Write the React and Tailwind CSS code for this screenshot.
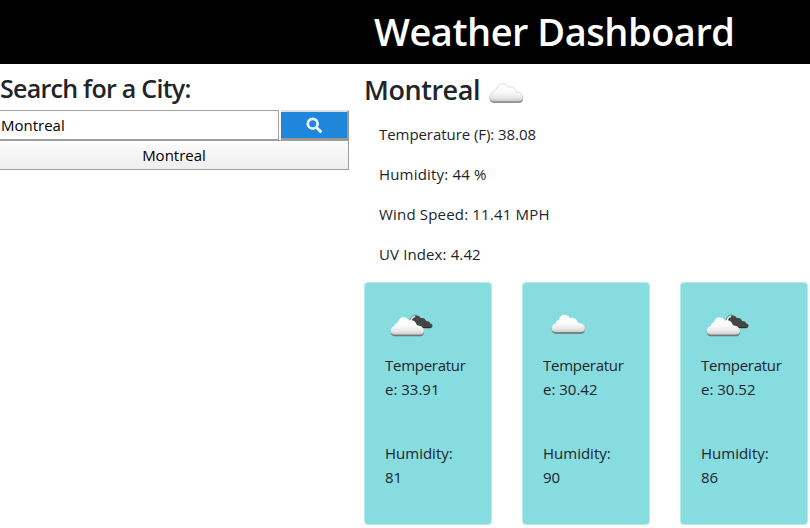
import React from "react";

const forecast = [
  { icon: "broken", temp: "33.91", humidity: "81" },
  { icon: "cloud", temp: "30.42", humidity: "90" },
  { icon: "broken", temp: "30.52", humidity: "86" },
];

const current = [
  { text: "Temperature (F): 38.08", cls: "tracking-[-0.06px]" },
  { text: "Humidity: 44 %", cls: "tracking-[0.18px]" },
  { text: "Wind Speed: 11.41 MPH", cls: "tracking-[0.18px]" },
  { text: "UV Index: 4.42", cls: "tracking-[0.12px]" },
];

const CLOUD =
  "M4.500 19C1.800 19 .3 17.200.3 14.900c0-2.700 1.500-4.400 3.900-5C4.600 7.800 6 6.500 7.600 6.100 8.200 2.800 10.300.7 13.300.7c2.600 0 4.500 1.400 5.500 3.700 3.400-1.200 6.700.3 7.600 3.600.2.900.8 1.400 1.700 1.600C31 9.800 34 11.700 34 14.800c0 2.500-1.500 4.200-4.200 4.200z";

function Cloud({ id, broken = false, outlined = false, className }) {
  return (
    <svg className={className} width={broken ? 43 : 35} height="23" viewBox={broken ? "0 0 43 23" : "0 0 35 23"}>
      <defs>
        <linearGradient id={id} x1="0" y1="0" x2="0" y2="1">
          <stop offset="0" stopColor="#ffffff" />
          <stop offset="0.5" stopColor="#fafafa" />
          <stop offset="0.8" stopColor="#e8e8e8" />
          <stop offset="1" stopColor="#cccccc" />
        </linearGradient>
        <linearGradient id={id + "-edge"} x1="0" y1="0" x2="0" y2="1">
          <stop offset="0.2" stopColor="#b0b0b0" stopOpacity="0.35" />
          <stop offset="0.8" stopColor="#a0a0a0" stopOpacity="0.8" />
          <stop offset="1" stopColor="#686868" />
        </linearGradient>
      </defs>
      {broken && (
        <>
          <path
            d="M21.500 6.500c.6-3.200 2.300-5.100 5-5.100 2.200 0 3.600 1 4.200 2.700 2.800-.8 5 .7 5.400 3 2.600-.1 3.800 1 4 2.400 1.900.3 2.500 1.300 2.400 2.400-.2 1.500-1.400 2.300-3.300 2.300H28z"
            fill="#454545"
          />
          <path d="M20 6c.8-3 2.600-4.900 5-4.900 1.500 0 2.700.6 3.400 1.600" fill="none" stroke="#6f7676" strokeWidth="0.900" />
          <path d="M20.900 7.500c.6-3 2-5 4.200-5" fill="none" stroke="#dcf0f0" strokeWidth="1.300" />
          <path d="M31.500 13.500h8" stroke="#2c2c2c" strokeWidth="1.200" strokeLinecap="round" />
        </>
      )}
      <g transform={broken ? "translate(0 2.5)" : undefined}>
        <path d={CLOUD} transform="translate(.2 .7)" fill={"url(#" + id + "-edge)"} />
        <path
          d={CLOUD}
          transform="translate(.5 0) scale(.98 .95)"
          fill={"url(#" + id + ")"}
          stroke={outlined ? "#c9c9c9" : "none"}
          strokeWidth="0.700"
        />
      </g>
    </svg>
  );
}

export default function App() {
  return (
    <div className="h-[528px] w-[810px] overflow-hidden bg-white font-['Open_Sans','Noto_Sans',sans-serif] text-[15px] leading-6 text-[#212529]">
      <header className="flex h-16 items-start bg-black pt-[7px] pl-[374px]">
        <h1 className="text-[38px] font-semibold leading-[48px] tracking-[-0.48px] whitespace-nowrap text-white">
          Weather Dashboard
        </h1>
      </header>
      <main className="flex">
        <aside className="w-[349px] shrink-0 pt-2">
          <h2 className="h-[38px] text-[25px] font-semibold leading-[32px] tracking-[-0.73px] whitespace-nowrap">
            Search for a City:
          </h2>
          <div className="flex h-[30px] gap-[2px]">
            <div className="flex w-[279px] items-center border-y border-r border-[#a0a0a0] pl-px text-black">
              <span>Montreal</span>
            </div>
            <button className="flex w-[68px] items-center justify-center border-t-2 border-r-2 border-b-2 border-t-[#dedede] border-r-[#999999] border-b-[#999999] bg-[#1e87dc]">
              <svg width="16" height="16" viewBox="0 0 16 16" fill="none" stroke="#e8f5ff">
                <circle cx="6.700" cy="6.700" r="4.900" strokeWidth="2.700" />
                <path d="M10.700 10.700l3.700 3.700" strokeWidth="3" strokeLinecap="round" />
              </svg>
            </button>
          </div>
          <button className="flex h-[30px] w-full items-center justify-center border-t border-r border-b border-[#a0a0a0] bg-linear-to-b from-[#fdfdfd] to-[#eeeeee] text-black">
            <span>Montreal</span>
          </button>
        </aside>
        <section className="ml-[15px] w-[446px] shrink-0 pt-2">
          <div className="flex h-[42px] items-start">
            <h2 className="text-[27px] font-semibold leading-[36px] tracking-[-0.45px] whitespace-nowrap">Montreal</h2>
            <Cloud id="now" outlined className="mt-[11px] ml-auto mr-[286px] shrink-0" />
          </div>
          <div className="mt-2 flex flex-col gap-4 pl-[15px]">
            {current.map((row) => (
              <p key={row.text} className="whitespace-nowrap">
                <span className={row.cls}>{row.text}</span>
              </p>
            ))}
          </div>
          <div className="mt-4 flex gap-[30px]">
            {forecast.map((day, i) => (
              <article key={i} className="h-[243px] w-[128px] shrink-0 rounded-[4px] border border-[#87dce0]/60 bg-[#87dce0] bg-clip-padding pl-5">
                <div className="h-[70px] pt-[31px]">
                  <Cloud id={"day" + i} broken={day.icon === "broken"} className={day.icon === "broken" ? "ml-[5px]" : "ml-[8px]"} />
                </div>
                <p className="whitespace-nowrap">
                  <span className="tracking-[-0.27px]">Temperatur</span>
                  <br />
                  <span>e: {day.temp}</span>
                </p>
                <p className="mt-10 whitespace-nowrap">
                  <span>Humidity:</span>
                  <br />
                  <span>{day.humidity}</span>
                </p>
              </article>
            ))}
          </div>
        </section>
      </main>
    </div>
  );
}
